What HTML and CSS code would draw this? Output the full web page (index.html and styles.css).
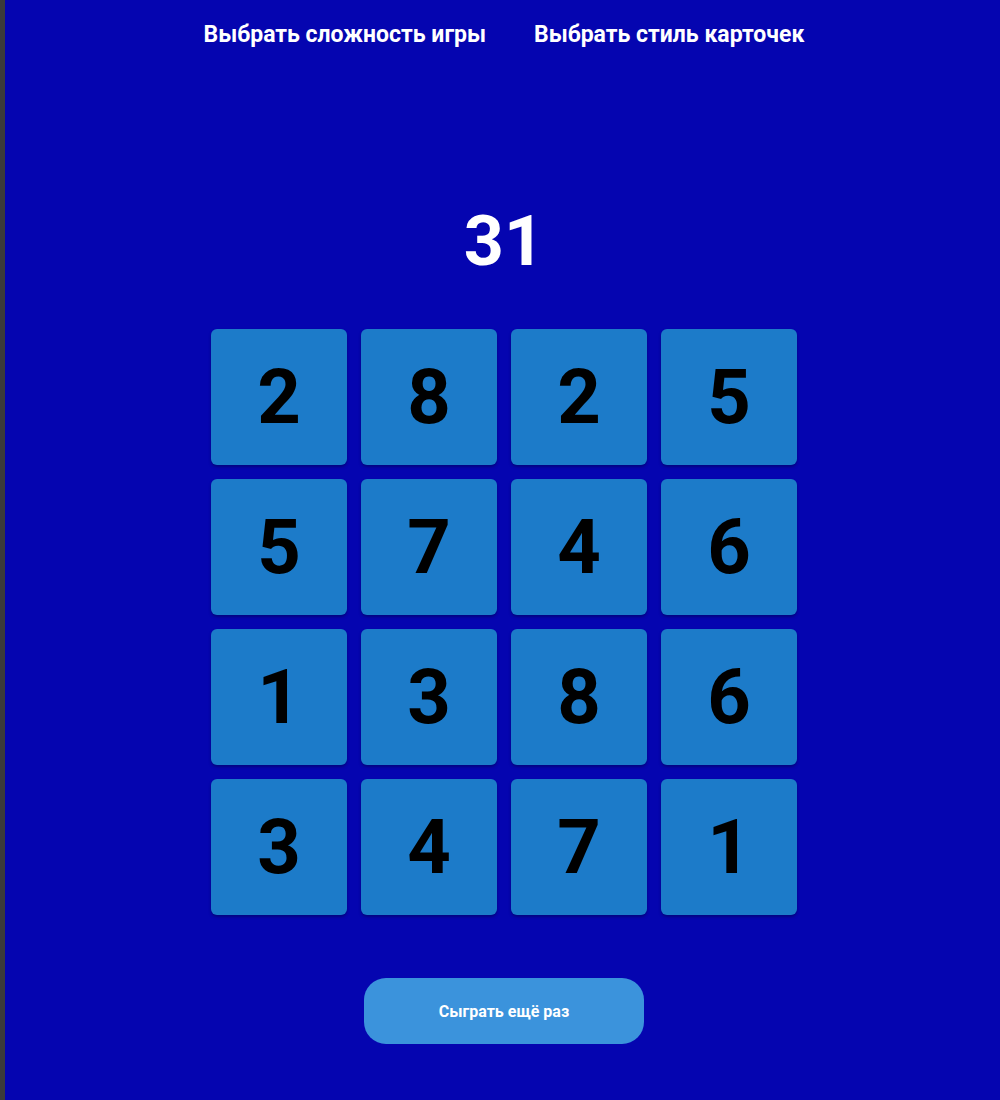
FILE: index.html
```html
<!DOCTYPE html>
<html lang="ru">
<head>
<meta charset="utf-8">
<title>Игра</title>
<link rel="stylesheet" href="styles.css">
</head>
<body>
<div class="page">
  <nav class="menu">
    <a class="menu-item" href="#">Выбрать сложность игры</a>
    <a class="menu-item" href="#">Выбрать стиль карточек</a>
  </nav>
  <div class="score">31</div>
  <div class="grid">
    <div class="card">2</div>
    <div class="card">8</div>
    <div class="card">2</div>
    <div class="card">5</div>
    <div class="card">5</div>
    <div class="card">7</div>
    <div class="card">4</div>
    <div class="card">6</div>
    <div class="card">1</div>
    <div class="card">3</div>
    <div class="card">8</div>
    <div class="card">6</div>
    <div class="card">3</div>
    <div class="card">4</div>
    <div class="card">7</div>
    <div class="card">1</div>
  </div>
  <div class="actions">
    <button class="replay">Сыграть ещё раз</button>
  </div>
</div>
</body>
</html>
```
FILE: styles.css
```css
html, body {
  margin: 0;
  padding: 0;
  height: 100%;
}
body {
  background: #0505b0;
  font-family: Roboto, "Noto Sans", sans-serif;
  border-left: 5px solid #3b3b3b;
  padding-left: 3px;
  box-sizing: border-box;
  min-height: 1100px;
}
.page {
  display: flex;
  flex-direction: column;
  align-items: center;
}
.menu {
  display: flex;
  gap: 48px;
  margin-top: 21px;
}
.menu-item {
  color: #ffffff;
  font-weight: 700;
  font-size: 23px;
  line-height: 27px;
  text-decoration: none;
}
.score {
  margin-top: 158px;
  color: #ffffff;
  font-weight: 700;
  font-size: 70px;
  line-height: 70px;
}
.grid {
  margin-top: 53px;
  display: grid;
  grid-template-columns: repeat(4, 136px);
  grid-auto-rows: 136px;
  gap: 14px;
}
.card {
  background: #1c7bc9;
  border-radius: 6px;
  box-shadow: 0 2px 3px rgba(0, 0, 40, 0.35);
  display: flex;
  align-items: center;
  justify-content: center;
  color: #000000;
  font-weight: 700;
  font-size: 76px;
  line-height: 1;
}
.actions {
  margin-top: 63px;
}
.replay {
  width: 280px;
  height: 66px;
  border: none;
  border-radius: 22px;
  background: #3b93dc;
  color: #ffffff;
  font-family: Roboto, "Noto Sans", sans-serif;
  font-weight: 700;
  font-size: 16px;
  cursor: pointer;
}
```
